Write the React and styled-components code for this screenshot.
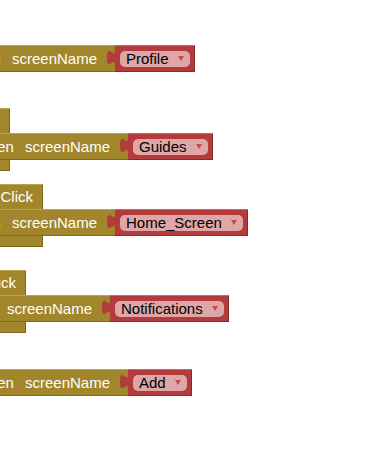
import React from 'react'
import styled, { createGlobalStyle } from 'styled-components'

const OLIVE = '#a2862b'
const OLIVE_LIGHT = '#bea44f'
const OLIVE_DARK = '#7c6620'
const RED = '#b33b3b'
const RED_LIGHT = '#cc6464'
const RED_DARK = '#872b2b'

const GlobalStyle = createGlobalStyle`
  html, body {
    margin: 0;
    padding: 0;
    background: #ffffff;
  }
  body {
    font-family: "Liberation Sans", Arial, sans-serif;
  }
`

const Workspace = styled.div`
  position: relative;
  width: 373px;
  height: 452px;
  overflow: hidden;
  background: #ffffff;
`

// each event block sits at its own spot on the blockly canvas
const BlockGroup = styled.div`
  position: absolute;
  left: 0;
  top: ${props => props.top}px;
  display: flex;
  flex-direction: column;
  align-items: flex-start;
`

const EventHead = styled.div`
  box-sizing: border-box;
  width: ${props => props.width}px;
  height: 25px;
  padding-right: 10px;
  display: flex;
  justify-content: flex-end;
  align-items: center;
  gap: 11px;
  background: ${OLIVE};
  box-shadow: inset 0 1px 0 ${OLIVE_LIGHT}, inset -1px 0 0 ${OLIVE_DARK};
  color: #ffffff;
  font-size: 15px;
  white-space: nowrap;
`

const EventFoot = styled.div`
  width: ${props => props.width}px;
  height: 11px;
  background: ${OLIVE};
  box-shadow: inset 0 -1px 0 ${OLIVE_DARK}, inset -1px 0 0 ${OLIVE_DARK};
`

const Row = styled.div`
  display: flex;
  align-items: flex-start;
`

const Statement = styled.div`
  box-sizing: border-box;
  width: ${props => props.width}px;
  height: 27px;
  padding-right: 18px;
  display: flex;
  justify-content: flex-end;
  align-items: center;
  gap: 11px;
  background: ${OLIVE};
  box-shadow: inset 0 1px 0 ${OLIVE_LIGHT}, inset 0 -1px 0 ${OLIVE_DARK};
  color: #ffffff;
  font-size: 15px;
  white-space: nowrap;
`

const Value = styled.div`
  position: relative;
  box-sizing: border-box;
  height: 27px;
  padding: 0 5px;
  display: flex;
  align-items: center;
  background: ${RED};
  box-shadow: inset 0 1px 0 ${RED_LIGHT}, inset -1px -1px 0 ${RED_DARK};
`

const Tab = styled.svg`
  position: absolute;
  left: -8px;
  top: 5px;
`

const Dropdown = styled.div`
  height: 16px;
  padding: 0 6px;
  display: flex;
  align-items: center;
  gap: 9px;
  border-radius: 5px;
  background: #dea6a6;
  color: #000000;
  font-size: 15px;
  white-space: nowrap;
`

const Arrow = styled.span`
  width: 0;
  height: 0;
  margin-top: -1px;
  border-left: 3.5px solid transparent;
  border-right: 3.5px solid transparent;
  border-top: 5px solid #c24a4a;
`

const blocks = [
  { top: 45, width: 115, screen: 'Profile' },
  { top: 108, width: 128, screen: 'Guides', event: 10 },
  { top: 184, width: 115, screen: 'Home_Screen', event: 43 },
  { top: 270, width: 110, screen: 'Notifications', event: 26 },
  { top: 369, width: 128, screen: 'Add' },
]

function ScreenBlock({ width, screen }) {
  return (
    <Row>
      <Statement width={width}>
        <span>open another screen</span>
        <span>screenName</span>
      </Statement>
      <Value>
        <Tab width="8" height="15" viewBox="0 0 8 15">
          <path d="M8,0 C8,10 0,-8 0,7.5 S8,5 8,15 Z" fill={RED} />
        </Tab>
        <Dropdown>
          {screen}
          <Arrow />
        </Dropdown>
      </Value>
    </Row>
  )
}

export default function App() {
  return (
    <>
      <GlobalStyle />
      <Workspace>
        {blocks.map(b => (
          <BlockGroup key={b.screen} top={b.top}>
            {b.event && (
              <EventHead width={b.event}>
                <span>when Button1</span>
                <span>Click</span>
              </EventHead>
            )}
            <ScreenBlock width={b.width} screen={b.screen} />
            {b.event && <EventFoot width={b.event} />}
          </BlockGroup>
        ))}
      </Workspace>
    </>
  )
}
